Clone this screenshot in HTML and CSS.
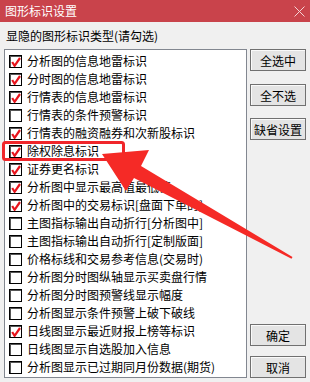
FILE: index.html
```html
<!DOCTYPE html>
<html lang="zh">
<head>
<meta charset="utf-8">
<link rel="stylesheet" href="styles.css">
</head>
<body>
<div class="win">
  <div class="titlebar">
    <span class="title">图形标识设置</span>
    <svg class="close" width="11" height="11" viewBox="0 0 11 11"><path d="M0.5 0.5 L10.5 10.5 M10.5 0.5 L0.5 10.5" stroke="#f4d3d5" stroke-width="1" fill="none"/></svg>
  </div>
  <div class="label">显隐的图形标识类型(请勾选)</div>
  <div class="main">
    <div class="list">
      <div class="row"><span class="cb on"></span><span class="txt">分析图的信息地雷标识</span></div>
      <div class="row"><span class="cb on"></span><span class="txt">分时图的信息地雷标识</span></div>
      <div class="row"><span class="cb on"></span><span class="txt">行情表的信息地雷标识</span></div>
      <div class="row"><span class="cb"></span><span class="txt">行情表的条件预警标识</span></div>
      <div class="row"><span class="cb on"></span><span class="txt">行情表的融资融券和次新股标识</span></div>
      <div class="row"><span class="cb on"></span><span class="txt">除权除息标识</span></div>
      <div class="row"><span class="cb on"></span><span class="txt">证券更名标识</span></div>
      <div class="row"><span class="cb on"></span><span class="txt">分析图中显示最高值最低值</span></div>
      <div class="row"><span class="cb on"></span><span class="txt">分析图中的交易标识[盘面下单的]</span></div>
      <div class="row"><span class="cb"></span><span class="txt">主图指标输出自动折行[分析图中]</span></div>
      <div class="row"><span class="cb"></span><span class="txt">主图指标输出自动折行[定制版面]</span></div>
      <div class="row"><span class="cb"></span><span class="txt">价格标线和交易参考信息(交易时)</span></div>
      <div class="row"><span class="cb"></span><span class="txt">分析图分时图纵轴显示买卖盘行情</span></div>
      <div class="row"><span class="cb"></span><span class="txt">分析图分时图预警线显示幅度</span></div>
      <div class="row"><span class="cb"></span><span class="txt">分析图显示条件预警上破下破线</span></div>
      <div class="row"><span class="cb on"></span><span class="txt">日线图显示最近财报上榜等标识</span></div>
      <div class="row"><span class="cb"></span><span class="txt">日线图显示自选股加入信息</span></div>
      <div class="row"><span class="cb"></span><span class="txt">分析图显示已过期同月份数据(期货)</span></div>
    </div>
    <div class="side">
      <div class="btn">全选中</div>
      <div class="btn">全不选</div>
      <div class="btn">缺省设置</div>
      <div class="spacer"></div>
      <div class="btn">确定</div>
      <div class="btn">取消</div>
    </div>
  </div>
  <svg class="annot" width="310" height="382" viewBox="0 0 310 382">
    <rect x="3.5" y="142.5" width="120" height="17" rx="2" ry="2" fill="none" stroke="#f0262a" stroke-width="3"/>
    <polygon fill="#f52a26" points="102,154 149,150 141,166 292.5,257 291.5,258.8 134,178 126,191"/>
  </svg>
</div>
</body>
</html>
```

FILE: styles.css
```css
* { box-sizing: border-box; }
html, body { margin: 0; padding: 0; }
body {
  width: 310px;
  height: 382px;
  background: #f0f0f0;
  font-family: "Noto Sans CJK SC", "Microsoft YaHei", sans-serif;
  font-size: 12px;
  color: #000;
  overflow: hidden;
}
.win {
  position: relative;
  width: 310px;
  height: 382px;
  display: flex;
  flex-direction: column;
}
.titlebar {
  height: 22px;
  background: #c9434b;
  display: flex;
  align-items: center;
  justify-content: space-between;
  padding: 0 5px 0 5px;
  flex: none;
}
.title {
  color: #fff;
  font-size: 12px;
  line-height: 22px;
}
.close { display: block; }
.label {
  height: 27px;
  line-height: 28px;
  padding-left: 6px;
  flex: none;
}
.main {
  display: flex;
  padding-left: 4px;
  height: 329px;
  flex: none;
}
.list {
  width: 243px;
  height: 329px;
  background: #fff;
  border: 1px solid #828790;
  padding: 2px 0 0 4px;
}
.row {
  height: 18px;
  display: flex;
  align-items: center;
  white-space: nowrap;
  overflow: hidden;
}
.cb {
  width: 13px;
  height: 13px;
  flex: none;
  border: 1px solid #000;
  box-shadow: inset 1px 1px 0 #555;
  background: #fff;
  margin-right: 5px;
  position: relative;
}
.cb.on::after {
  content: "";
  position: absolute;
  left: 1px;
  top: 1px;
  width: 10px;
  height: 10px;
  background: no-repeat center / 10px 10px url("data:image/svg+xml;utf8,<svg xmlns='http://www.w3.org/2000/svg' width='10' height='10' viewBox='0 0 10 10'><path d='M1.2 5 L3.6 8.8 L9 1' stroke='%23e8141c' stroke-width='2.2' fill='none' stroke-linejoin='miter'/></svg>");
}
.txt { line-height: 18px; }
.side {
  display: flex;
  flex-direction: column;
  margin-left: 3px;
  width: 56px;
}
.btn {
  width: 56px;
  height: 22px;
  border: 1px solid #707070;
  background: #e4e4e4;
  box-shadow: inset 1px 1px 0 #fafafa;
  display: flex;
  align-items: center;
  justify-content: center;
  flex: none;
}
.btn:nth-child(2) { margin-top: 13px; }
.btn:nth-child(3) { margin-top: 12px; }
.spacer { flex: 1; }
.btn:nth-child(6) { margin-top: 10px; }
.annot {
  position: absolute;
  left: 0;
  top: 0;
  pointer-events: none;
}
```
